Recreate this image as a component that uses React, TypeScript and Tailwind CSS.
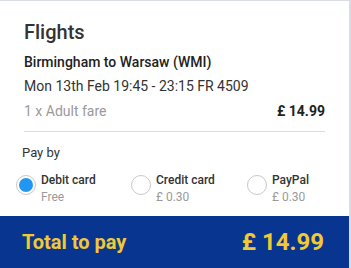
const OPTIONS = [
  { id: "debit", label: "Debit card", sub: "Free", checked: true },
  { id: "credit", label: "Credit card", sub: "£ 0.30", checked: false },
  { id: "paypal", label: "PayPal", sub: "£ 0.30", checked: false },
]

function Radio({ checked }: { checked: boolean }) {
  return (
    <span className="mt-[3px] flex h-[20px] w-[20px] shrink-0 items-center justify-center rounded-full border border-[#c8c8c8] bg-white">
      {checked && <span className="h-[14px] w-[14px] rounded-full bg-[#2196f3]" />}
    </span>
  )
}

export default function App() {
  return (
    <div
      className="h-[268px] w-[351px] overflow-hidden bg-[#d9dde2] pt-px"
      style={{ fontFamily: "Roboto, 'Liberation Sans', sans-serif" }}
    >
      <div className="flex h-[267px] w-[349px] flex-col bg-white">
        <div className="px-6 pt-[19px]">
          <h2 className="text-[20px] font-medium leading-[24px] text-[#333]">Flights</h2>
          <p className="mt-[8px] text-[14px] font-medium leading-[20px] text-[#222]">
            Birmingham to Warsaw (WMI)
          </p>
          <p className="mt-[4px] text-[14px] leading-[20px] text-[#333]">
            Mon 13th Feb 19:45 - 23:15 FR 4509
          </p>
          <div className="mt-[5px] flex items-center justify-between pb-[10px] text-[14px] leading-[20px]">
            <span className="text-[#9a9a9a]">1 x Adult fare</span>
            <span className="font-bold text-[#222]">£ 14.99</span>
          </div>
          <div className="h-px bg-[#dcdcdc]" />
        </div>

        <div className="px-[22px] pt-[12px] text-[13px] leading-[18px] text-[#333]">Pay by</div>

        <div className="mt-[10px] grid grid-cols-[115px_116px_1fr] pl-[16px]">
          {OPTIONS.map((o) => (
            <div key={o.id} className="flex gap-[5px]">
              <Radio checked={o.checked} />
              <div className="pt-[1px]">
                <div className="text-[12px] font-medium leading-[15px] text-[#333]">{o.label}</div>
                <div className="mt-[2px] text-[12px] leading-[15px] text-[#9a9a9a]">{o.sub}</div>
              </div>
            </div>
          ))}
        </div>

        <div className="mt-auto flex h-[52px] items-center justify-between bg-[#073590] pl-[22px] pr-[25px]">
          <span className="text-[20px] font-bold text-[#f1c933]">Total to pay</span>
          <span className="text-[24px] font-bold text-[#f1c933]">£ 14.99</span>
        </div>
      </div>
    </div>
  )
}
